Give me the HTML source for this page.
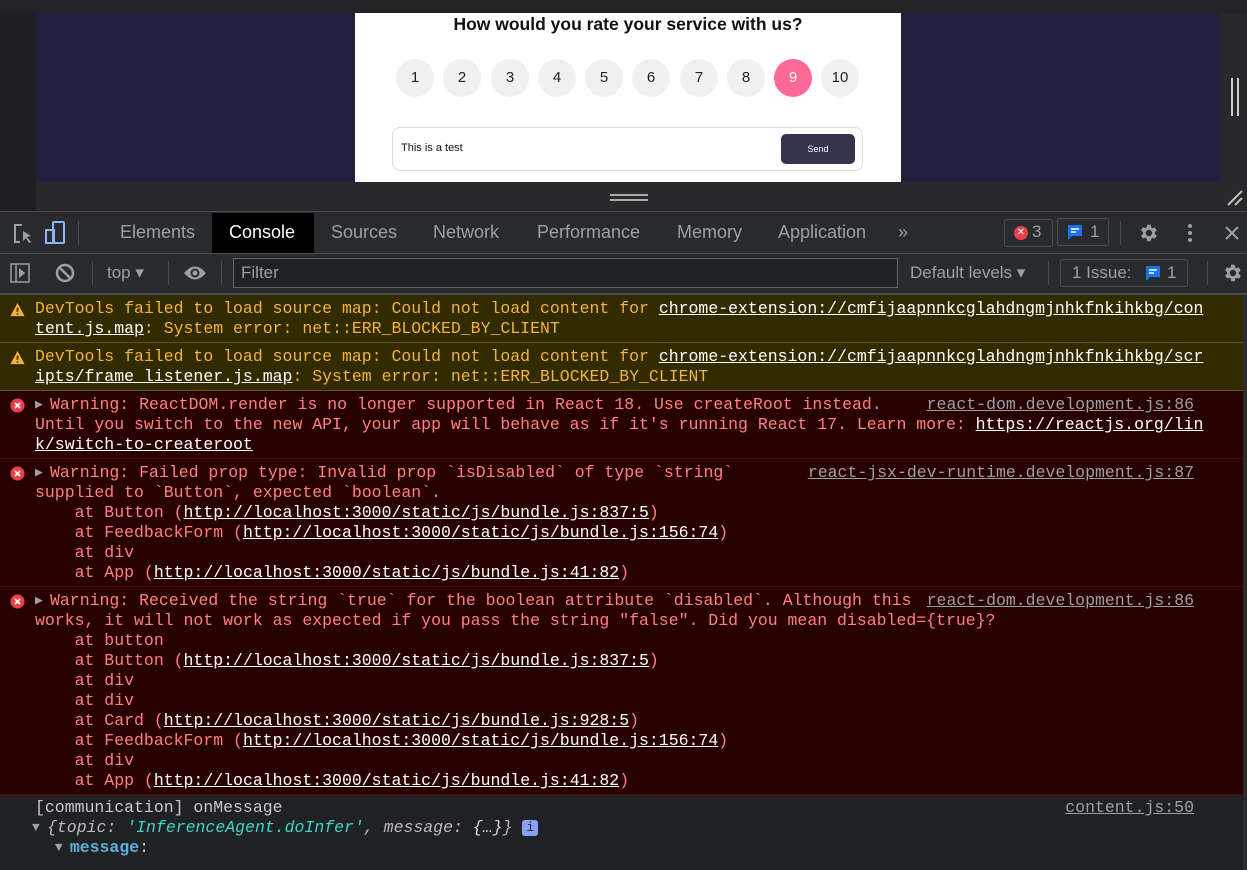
<!DOCTYPE html>
<html><head><meta charset="utf-8"><style>
*{margin:0;padding:0;box-sizing:border-box}
body{width:1247px;height:870px;overflow:hidden;background:#202124;font-family:"Liberation Sans",sans-serif;position:relative}
.abs{position:absolute}
.circ{position:absolute;top:59px;width:38px;height:38px;border-radius:50%;background:#f0f0f0;color:#222;font-size:15px;text-align:center;line-height:38px}
.tab{position:absolute;top:212px;height:41px;line-height:41px;font-size:18px;color:#9aa0a6}
.mono{font-family:"Liberation Mono",monospace;font-size:16.5px;line-height:20px}
.row{position:relative;padding:4px 0 3px 35px;white-space:pre}
.warn{background:#332b00;border-bottom:1px solid #665500;color:#f2b33d}
.err{background:#290000;border-bottom:1px solid #5c0000;color:#ff8080}
.u{color:#fff;text-decoration:underline}
.src{position:absolute;right:49px;top:4px;color:#9aa0a6;text-decoration:underline}
.ic{position:absolute;left:10px;top:7px;width:15px;height:15px}
.ar{display:inline-block;width:15px;height:20px;line-height:20px;vertical-align:top;color:#9aa0a6;font-size:13px}
</style></head><body>
<div class="abs" style="left:0;top:0;width:1247px;height:13px;background:#232325"></div>
<div class="abs" style="left:0;top:13px;width:36px;height:199px;background:#1f1f21"></div>
<div class="abs" style="left:36px;top:13px;width:1184px;height:169px;background:#20213f"></div>
<div class="abs" style="left:1220px;top:13px;width:27px;height:199px;background:#29292c"></div>
<div class="abs" style="left:1231px;top:78px;width:2px;height:38px;background:#ccc"></div>
<div class="abs" style="left:1237px;top:78px;width:2px;height:38px;background:#ccc"></div>
<div class="abs" style="left:36px;top:182px;width:1184px;height:30px;background:#29292c"></div>
<div class="abs" style="left:610px;top:194px;width:38px;height:2px;background:#aaa"></div>
<div class="abs" style="left:610px;top:199px;width:38px;height:2px;background:#aaa"></div>
<svg class="abs" style="left:1225px;top:186px" width="20" height="22"><path d="M3 19L17 5M10 19L17 12" stroke="#bbb" stroke-width="2"/></svg>
<div class="abs" style="left:355px;top:13px;width:546px;height:169px;background:#fff"></div>
<div class="abs" style="left:355px;top:14px;width:546px;text-align:center;font-size:17.5px;font-weight:bold;color:#111">How would you rate your service with us?</div>
<div class="circ" style="left:396px">1</div><div class="circ" style="left:443px">2</div><div class="circ" style="left:491px">3</div><div class="circ" style="left:538px">4</div><div class="circ" style="left:585px">5</div><div class="circ" style="left:632px">6</div><div class="circ" style="left:680px">7</div><div class="circ" style="left:727px">8</div><div class="circ" style="left:774px;background:#ff6a95;color:#fff">9</div><div class="circ" style="left:821px">10</div>
<div class="abs" style="left:392px;top:127px;width:471px;height:44px;border:1px solid #ddd;border-radius:8px"></div>
<div class="abs" style="left:401px;top:142px;font-size:11px;color:#111">This is a test</div>
<div class="abs" style="left:781px;top:134px;width:74px;height:30px;background:#34344f;border-radius:5px;color:#fff;font-size:9px;text-align:center;line-height:30px">Send</div>

<div class="abs" style="left:0;top:211px;width:1247px;height:1px;background:#4a4c50"></div>
<div class="abs" style="left:0;top:212px;width:1247px;height:41px;background:#292a2d"></div>
<svg class="abs" style="left:12px;top:222px" width="24" height="24"><path d="M10 3H3v17h5" stroke="#9aa0a6" stroke-width="2" fill="none"/><path d="M11 9l8 5-4 1 4 5-2 1-3-5-3 3z" fill="#9aa0a6"/></svg>
<svg class="abs" style="left:44px;top:220px" width="24" height="26"><rect x="9" y="2" width="11" height="21" rx="1" stroke="#8ab4f8" stroke-width="2" fill="none"/><rect x="2" y="10" width="8" height="13" stroke="#8ab4f8" stroke-width="2" fill="none"/></svg>
<div class="abs" style="left:78px;top:221px;width:1px;height:24px;background:#4a4c50"></div>
<div class="tab" style="left:120px">Elements</div>
<div class="abs" style="left:212px;top:213px;width:102px;height:40px;background:#000"></div>
<div class="tab" style="left:229px;color:#fff">Console</div>
<div class="tab" style="left:331px">Sources</div>
<div class="tab" style="left:433px">Network</div>
<div class="tab" style="left:537px">Performance</div>
<div class="tab" style="left:677px">Memory</div>
<div class="tab" style="left:778px">Application</div>
<div class="tab" style="left:898px">»</div>
<div class="abs" style="left:1004px;top:219px;width:49px;height:28px;border:1px solid #4a4c50;border-radius:3px"></div>
<div class="abs" style="left:1014px;top:226px;width:14px;height:14px;border-radius:50%;background:#e8414b;color:#fff;font-size:10px;line-height:14px;text-align:center">✕</div>
<div class="abs" style="left:1032px;top:222px;color:#9aa0a6;font-size:17px">3</div>
<div class="abs" style="left:1057px;top:218px;width:52px;height:28px;border:1px solid #4a4c50;border-radius:3px"></div>
<svg class="abs" style="left:1066px;top:223px" width="18" height="18"><path d="M2 2h14v11H6l-4 4z" fill="#1a73e8"/><path d="M5 6h8M5 9h5" stroke="#fff" stroke-width="1.5"/></svg>
<div class="abs" style="left:1090px;top:222px;color:#9aa0a6;font-size:17px">1</div>
<div class="abs" style="left:1120px;top:221px;width:1px;height:24px;background:#4a4c50"></div>
<svg class="abs" style="left:1137px;top:222px" width="22" height="22" viewBox="0 0 24 24"><path fill="#9aa0a6" d="M19.4 13a7.5 7.5 0 000-2l2.1-1.6-2-3.5-2.5 1a7 7 0 00-1.7-1L15 3h-4l-.4 2.7a7 7 0 00-1.7 1l-2.5-1-2 3.5L6.6 11a7.5 7.5 0 000 2l-2.1 1.6 2 3.5 2.5-1a7 7 0 001.7 1L11 21h4l.4-2.7a7 7 0 001.7-1l2.5 1 2-3.5zM13 15.5a3.5 3.5 0 110-7 3.5 3.5 0 010 7z"/></svg>
<div class="abs" style="left:1188px;top:224px;width:4px;height:4px;border-radius:50%;background:#9aa0a6;box-shadow:0 7px #9aa0a6,0 14px #9aa0a6"></div>
<svg class="abs" style="left:1224px;top:225px" width="16" height="16"><path d="M2 2L14 14M14 2L2 14" stroke="#9aa0a6" stroke-width="2"/></svg>

<div class="abs" style="left:0;top:253px;width:1247px;height:1px;background:#4a4c50"></div>
<div class="abs" style="left:0;top:254px;width:1247px;height:39px;background:#292a2d"></div>
<svg class="abs" style="left:10px;top:263px" width="22" height="20"><rect x="1" y="1" width="18" height="18" stroke="#9aa0a6" stroke-width="1.5" fill="none"/><path d="M6 1v18" stroke="#9aa0a6" stroke-width="1.5"/><path d="M9 5l6 5-6 5z" fill="#9aa0a6"/></svg>
<svg class="abs" style="left:55px;top:263px" width="20" height="20"><circle cx="10" cy="10" r="8" stroke="#9aa0a6" stroke-width="2.5" fill="none"/><path d="M4.5 4.5l11 11" stroke="#9aa0a6" stroke-width="2.5"/></svg>
<div class="abs" style="left:92px;top:261px;width:1px;height:24px;background:#4a4c50"></div>
<div class="abs" style="left:107px;top:263px;font-size:17px;color:#9aa0a6">top ▾</div>
<div class="abs" style="left:168px;top:261px;width:1px;height:24px;background:#4a4c50"></div>
<svg class="abs" style="left:183px;top:263px" width="24" height="20"><path d="M1 10Q12-3 23 10Q12 23 1 10z" fill="#9aa0a6"/><circle cx="12" cy="10" r="4.5" fill="#292a2d"/><circle cx="12" cy="10" r="2.5" fill="#9aa0a6"/></svg>
<div class="abs" style="left:221px;top:261px;width:1px;height:24px;background:#4a4c50"></div>
<div class="abs" style="left:233px;top:258px;width:665px;height:30px;background:#202124;border:1px solid #5f6368"></div>
<div class="abs" style="left:241px;top:263px;font-size:17px;color:#9aa0a6">Filter</div>
<div class="abs" style="left:910px;top:263px;font-size:17px;color:#9aa0a6">Default levels ▾</div>
<div class="abs" style="left:1048px;top:261px;width:1px;height:24px;background:#4a4c50"></div>
<div class="abs" style="left:1060px;top:259px;width:128px;height:28px;border:1px solid #4a4c50;border-radius:3px"></div>
<div class="abs" style="left:1072px;top:263px;font-size:17px;color:#9aa0a6">1 Issue:</div>
<svg class="abs" style="left:1144px;top:264px" width="18" height="18"><path d="M2 2h14v11H6l-4 4z" fill="#1a73e8"/><path d="M5 6h8M5 9h5" stroke="#fff" stroke-width="1.5"/></svg>
<div class="abs" style="left:1167px;top:263px;font-size:17px;color:#9aa0a6">1</div>
<div class="abs" style="left:1207px;top:261px;width:1px;height:24px;background:#4a4c50"></div>
<svg class="abs" style="left:1221px;top:262px" width="22" height="22" viewBox="0 0 24 24"><path fill="#9aa0a6" d="M19.4 13a7.5 7.5 0 000-2l2.1-1.6-2-3.5-2.5 1a7 7 0 00-1.7-1L15 3h-4l-.4 2.7a7 7 0 00-1.7 1l-2.5-1-2 3.5L6.6 11a7.5 7.5 0 000 2l-2.1 1.6 2 3.5 2.5-1a7 7 0 001.7 1L11 21h4l.4-2.7a7 7 0 001.7-1l2.5 1 2-3.5zM13 15.5a3.5 3.5 0 110-7 3.5 3.5 0 010 7z"/></svg>
<div class="abs" style="left:0;top:293px;width:1247px;height:2px;background:#4a4c50"></div>

<div class="abs mono" style="left:0;top:295px;width:1243px"><div class="row warn"><svg class="ic" viewBox="0 0 16 16"><path d="M8 1L15.5 15H.5z" fill="#f2b33d"/><path d="M8 6v4.5M8 12v1.5" stroke="#332b00" stroke-width="1.8"/></svg>DevTools failed to load source map: Could not load content for <span class="u">chrome-extension://cmfijaapnnkcglahdngmjnhkfnkihkbg/con
tent.js.map</span>: System error: net::ERR_BLOCKED_BY_CLIENT</div><div class="row warn"><svg class="ic" viewBox="0 0 16 16"><path d="M8 1L15.5 15H.5z" fill="#f2b33d"/><path d="M8 6v4.5M8 12v1.5" stroke="#332b00" stroke-width="1.8"/></svg>DevTools failed to load source map: Could not load content for <span class="u">chrome-extension://cmfijaapnnkcglahdngmjnhkfnkihkbg/scr
ipts/frame_listener.js.map</span>: System error: net::ERR_BLOCKED_BY_CLIENT</div><div class="row err"><svg class="ic" viewBox="0 0 16 16"><circle cx="8" cy="8" r="7.5" fill="#e8414b"/><path d="M5.3 5.3l5.4 5.4M10.7 5.3l-5.4 5.4" stroke="#fff" stroke-width="1.8"/></svg><span class="ar">▶</span>Warning: ReactDOM.render is no longer supported in React 18. Use createRoot instead.
Until you switch to the new API, your app will behave as if it's running React 17. Learn more: <span class="u">https://reactjs.org/lin
k/switch-to-createroot</span><span class="src">react-dom.development.js:86</span></div><div class="row err"><svg class="ic" viewBox="0 0 16 16"><circle cx="8" cy="8" r="7.5" fill="#e8414b"/><path d="M5.3 5.3l5.4 5.4M10.7 5.3l-5.4 5.4" stroke="#fff" stroke-width="1.8"/></svg><span class="ar">▶</span>Warning: Failed prop type: Invalid prop `isDisabled` of type `string`
supplied to `Button`, expected `boolean`.
    at Button (<span class="u">http://localhost:3000/static/js/bundle.js:837:5</span>)
    at FeedbackForm (<span class="u">http://localhost:3000/static/js/bundle.js:156:74</span>)
    at div
    at App (<span class="u">http://localhost:3000/static/js/bundle.js:41:82</span>)<span class="src">react-jsx-dev-runtime.development.js:87</span></div><div class="row err"><svg class="ic" viewBox="0 0 16 16"><circle cx="8" cy="8" r="7.5" fill="#e8414b"/><path d="M5.3 5.3l5.4 5.4M10.7 5.3l-5.4 5.4" stroke="#fff" stroke-width="1.8"/></svg><span class="ar">▶</span>Warning: Received the string `true` for the boolean attribute `disabled`. Although this
works, it will not work as expected if you pass the string "false". Did you mean disabled={true}?
    at button
    at Button (<span class="u">http://localhost:3000/static/js/bundle.js:837:5</span>)
    at div
    at div
    at Card (<span class="u">http://localhost:3000/static/js/bundle.js:928:5</span>)
    at FeedbackForm (<span class="u">http://localhost:3000/static/js/bundle.js:156:74</span>)
    at div
    at App (<span class="u">http://localhost:3000/static/js/bundle.js:41:82</span>)<span class="src">react-dom.development.js:86</span></div><div class="row" style="color:#c8c8c8;padding-top:3px">[communication] onMessage<span class="src" style="top:3px">content.js:50</span>
<span class="ar" style="margin-left:-3px">▼</span><i style="color:#bbb">{topic: <span style="color:#3ed6c4">'InferenceAgent.doInfer'</span>, message: <span style="color:#ddd">{…}</span>}</i> <span style="background:#8b9ff8;color:#222;border-radius:3px;padding:0 4px;font-size:13px;line-height:16px;display:inline-block;vertical-align:top;margin-top:2px">i</span>
  <span class="ar">▼</span><b style="color:#5db0d7">message</b>:</div></div>
<div class="abs" style="left:1243px;top:295px;width:4px;height:575px;background:#2b2c2f"></div>
</body></html>
